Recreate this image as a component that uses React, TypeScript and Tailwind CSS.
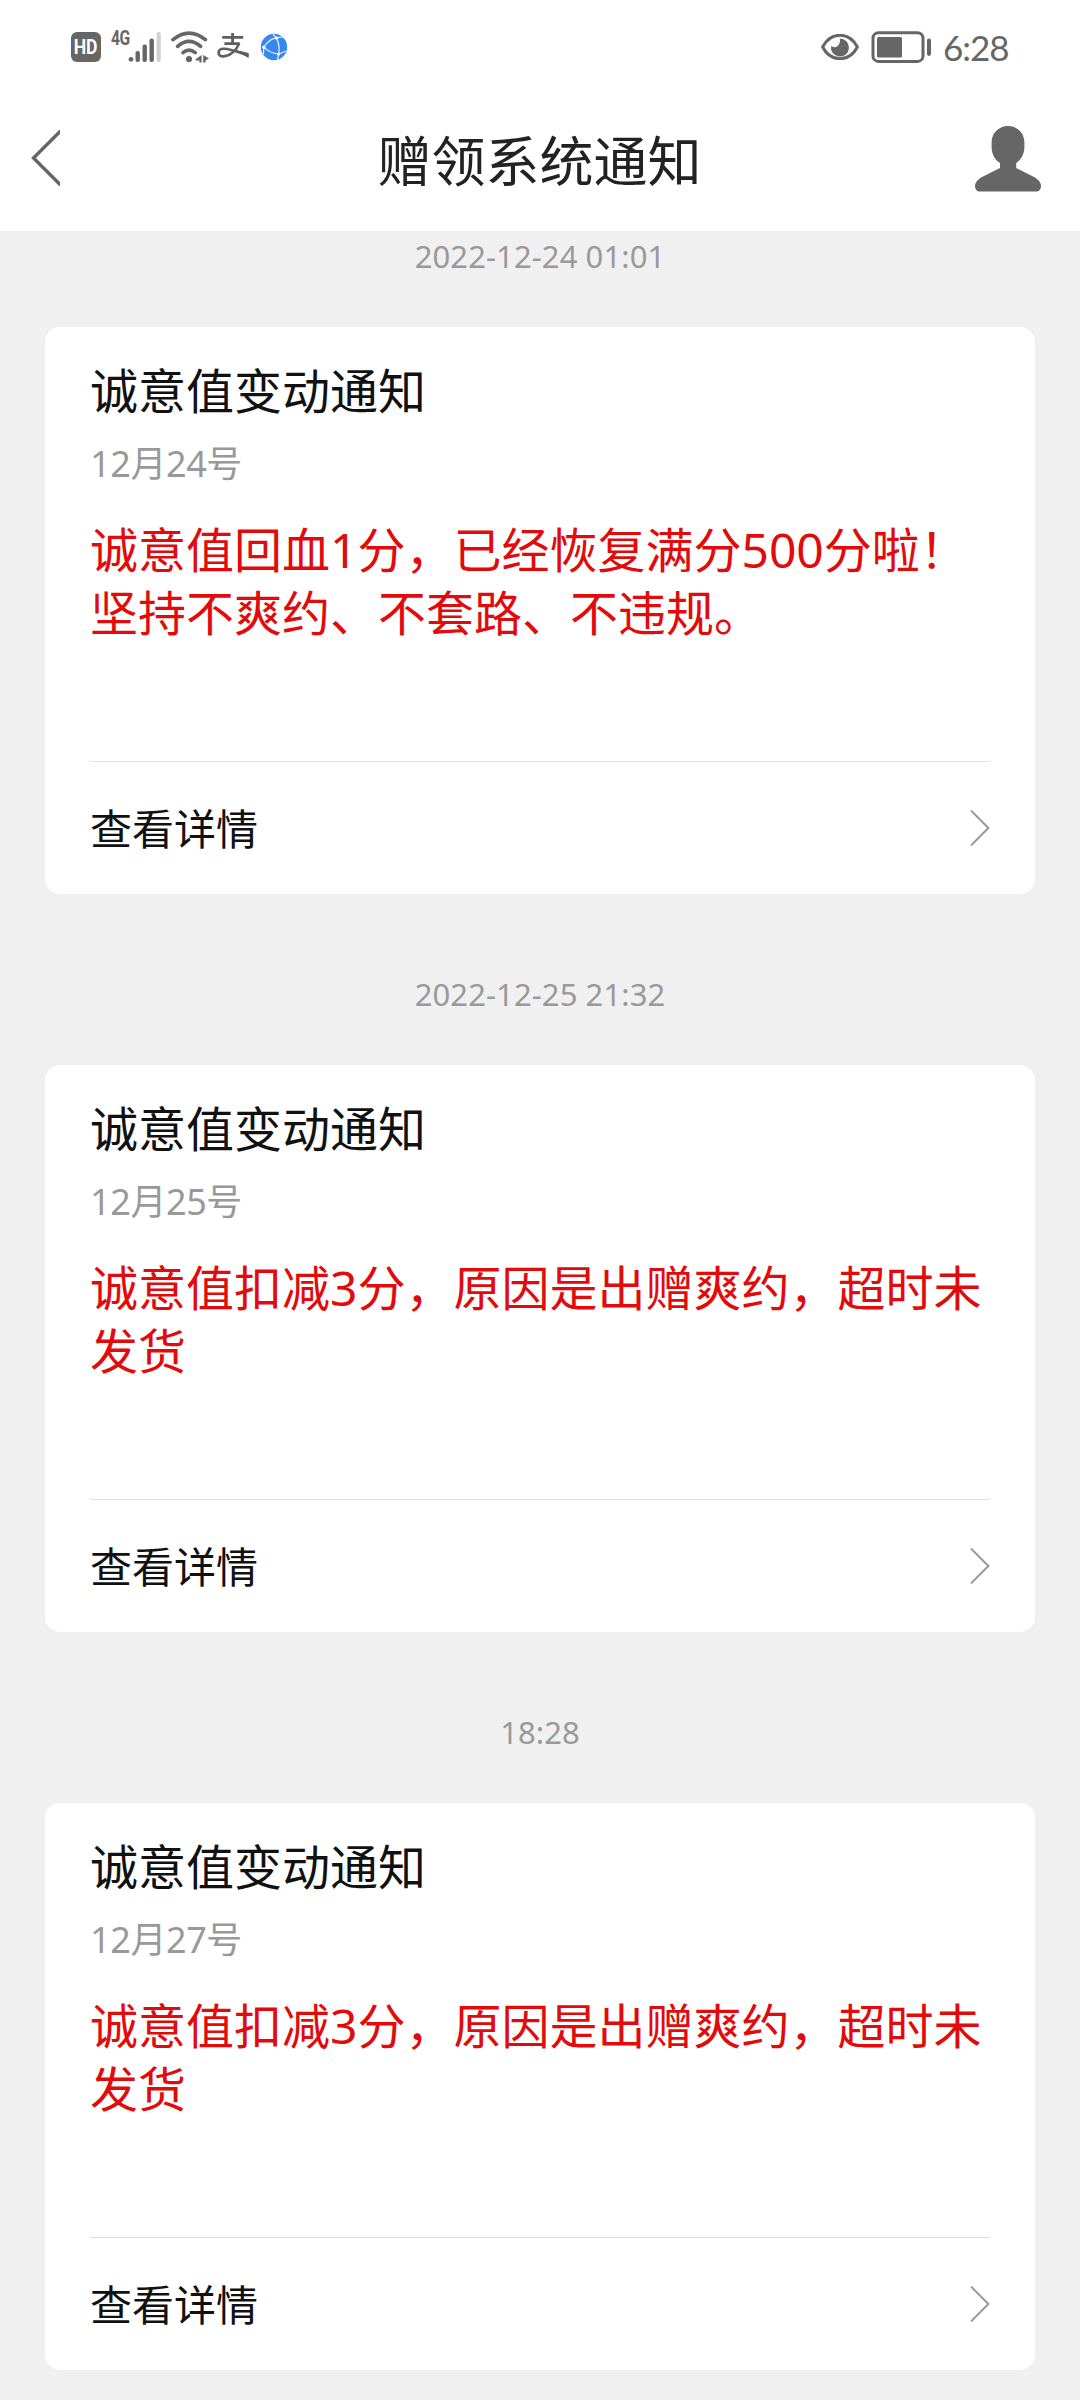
const notices = [
  {
    time: "2022-12-24 01:01",
    date: "12月24号",
    lines: ["诚意值回血1分，已经恢复满分500分啦！", "坚持不爽约、不套路、不违规。"],
  },
  {
    time: "2022-12-25 21:32",
    date: "12月25号",
    lines: ["诚意值扣减3分，原因是出赠爽约，超时未", "发货"],
  },
  {
    time: "18:28",
    date: "12月27号",
    lines: ["诚意值扣减3分，原因是出赠爽约，超时未", "发货"],
  },
];

function SignalIcon() {
  return (
    <svg width="33" height="32" viewBox="0 0 33 32" fill="#666" className="-ml-px">
      <circle cx="3" cy="28.3" r="2.4" />
      <rect x="7.5" y="20" width="4.4" height="11" rx="2" />
      <rect x="14.5" y="13.5" width="4.4" height="17.5" rx="2" />
      <rect x="21.5" y="7.5" width="4.4" height="23.5" rx="2" />
      <rect x="28.6" y="1" width="4.2" height="30" rx="2" fill="#d0d0d0" />
    </svg>
  );
}

function WifiIcon() {
  return (
    <svg width="38" height="32" viewBox="0 0 38 32" fill="none" stroke="#666" className="ml-[10px]">
      <path d="M2 8.6 Q18 -4.4 34.4 8.6" strokeWidth="3.7" strokeLinecap="round" />
      <path d="M6.6 15.4 Q18 5.4 29.6 15.4" strokeWidth="3.7" strokeLinecap="round" />
      <path d="M12 21.6 Q18 16.8 24.2 21.6" strokeWidth="3.7" strokeLinecap="round" />
      <circle cx="18" cy="28" r="3.1" fill="#666" stroke="none" />
      <path d="M30.6 24v7.6h-2.2v-2.2h-3.8v-1.2zM32.2 24l5.8 3.6-3.4 1.6v2.4h-2.4z" fill="#666" stroke="none" />
    </svg>
  );
}

function AlipayIcon() {
  return (
    <svg width="32" height="26" viewBox="0 0 32 26" fill="none" stroke="#5f5f5f" className="mb-px ml-2">
      <path d="M5.2 4.4h21M15.6 0v11M7.4 10.6h15.4" strokeWidth="2.8" />
      <path
        d="M22.2 10.4C19.4 17 13 23.4 6.4 23.4C.2 23.4 0 16.4 6 15.8C12.4 15.2 22 19.4 31.4 22.6"
        strokeWidth="2.6"
      />
      <path d="M17 16.6L31.6 20V25Z" fill="#5f5f5f" stroke="none" />
    </svg>
  );
}

function BrowserIcon() {
  return (
    <svg width="28" height="28" viewBox="0 0 28 28" className="ml-[11px]">
      <circle cx="14" cy="14" r="13.2" fill="#3688ee" />
      <g fill="none" stroke="#e8f2ff" strokeWidth="1.2">
        <path d="M3.8 14.2C7.4 8.4 13 3.6 22.6 4.2" />
        <path d="M3.8 14.2C7.4 18 12.8 20.6 18.6 21" />
        <path d="M13 1.2C18.8 6.6 21 14.4 17.4 26.6" />
        <path d="M18.4 21.2L26 18" />
        <path d="M3.8 14.2L3.4 21" />
      </g>
      <g fill="#fff">
        <circle cx="3.8" cy="14.2" r="1.6" />
        <circle cx="16.6" cy="5" r="1.6" />
        <circle cx="18.6" cy="21" r="1.6" />
      </g>
    </svg>
  );
}

function EyeIcon() {
  return (
    <svg width="38" height="26" viewBox="0 0 38 26">
      <path
        d="M1.6 13C9.8-2.6 28.2-2.6 36.4 13C28.2 28.6 9.8 28.6 1.6 13Z"
        fill="none"
        stroke="#666"
        strokeWidth="3"
        strokeLinejoin="round"
      />
      <path d="M18.8 4.6a9 9 0 1 1-8.7 7.4c1.8 1.4 4.4 1.6 6.3.2c2.4-1.8 3-4.6 2.4-7.6z" fill="#666" />
    </svg>
  );
}

function BatteryIcon() {
  return (
    <svg width="60" height="32" viewBox="0 0 60 32" fill="#666" className="ml-3">
      <rect x="2" y="1.8" width="50" height="28.6" rx="5.5" fill="none" stroke="#666" strokeWidth="3" />
      <rect x="6" y="6" width="25" height="20.4" rx="1.5" />
      <rect x="56" y="7.5" width="4" height="17.4" rx="1.8" />
    </svg>
  );
}

function StatusBar() {
  return (
    <div className="flex h-[93px] items-center justify-between px-[71px]">
      <div className="flex items-center">
        <div className="flex h-[30px] w-[30px] items-center justify-center rounded-[6px] bg-[#666] text-white">
          <span className="scale-x-[0.88] font-['Roboto','Noto_Sans_CJK_SC',sans-serif] text-[20px] font-bold leading-none">
            HD
          </span>
        </div>
        <span className="mb-[18px] ml-[10px] w-[18px] origin-left scale-x-[0.78] font-['Roboto','Noto_Sans_CJK_SC',sans-serif] text-[20px] font-bold leading-none tracking-[-0.5px] text-[#666]">
          4G
        </span>
        <SignalIcon />
        <WifiIcon />
        <AlipayIcon />
        <BrowserIcon />
      </div>
      <div className="flex items-center">
        <EyeIcon />
        <BatteryIcon />
        <span className="ml-[12px] mt-px w-[66px] whitespace-nowrap font-['Lato','Noto_Sans_CJK_SC',sans-serif] text-[35px] leading-none tracking-[-1px] text-[#666]">
          6:28
        </span>
      </div>
    </div>
  );
}

function NavBar() {
  return (
    <div className="flex h-[138px] items-center justify-between pl-[31px] pr-[39px]">
      <svg width="29" height="56" viewBox="0 0 29 56" fill="none" stroke="#666" strokeWidth="3.4" className="mr-[44px] mb-2">
        <path d="M30 0.5L2.5 28L30 55.5" />
      </svg>
      <h1 className="mb-[3px] text-[54px] leading-[72px] text-[#222]">赠领系统通知</h1>
      <svg width="66" height="66" viewBox="0 0 66 66" fill="#666" className="mb-[6px]">
        <path d="M33 0C42 0 49.4 7 49.4 16.5V21C49.4 28 46 34 41.2 37V42L60 51.6C64 54 66 57 66 60C66 63.4 64 65.6 61 65.6H5C2 65.6 0 63.4 0 60C0 57 2 54 6 51.6L25 42V37C20 34 16.6 28 16.6 21V16.5C16.6 7 24 0 33 0Z" />
      </svg>
    </div>
  );
}

function NoticeCard({ date, lines }: { date: string; lines: string[] }) {
  return (
    <div className="mx-[45px] flex h-[567px] flex-col rounded-[15px] bg-white px-[45px]">
      <h2 className="mt-[32px] text-[48px] leading-[64px] text-[#111]">诚意值变动通知</h2>
      <p className="mt-[17px] text-[36px] leading-[48px] tracking-[-0.4px] text-[#999]">{date}</p>
      <div className="mt-[30px] text-[48px] leading-[63px] text-[#e20a0a]">
        {lines.map((line) => (
          <p key={line} className="whitespace-nowrap">
            {line}
          </p>
        ))}
      </div>
      <div className="mt-auto flex h-[133px] items-center justify-between border-t border-[#e0e0e0]">
        <span className="mt-[2px] text-[42px] leading-[56px] text-[#111]">查看详情</span>
        <svg width="20" height="36" viewBox="0 0 20 36" fill="none" stroke="#999" strokeWidth="2">
          <path d="M1 0.6L18.4 18L1 35.4" />
        </svg>
      </div>
    </div>
  );
}

export default function App() {
  return (
    <div className="h-[2400px] w-[1080px] overflow-hidden bg-[#f0f0f0] font-['Noto_Sans','Noto_Sans_CJK_SC',sans-serif]">
      <header className="bg-white">
        <StatusBar />
        <NavBar />
      </header>
      <main className="-mt-[75px]">
        {notices.map((n) => (
          <section key={n.date}>
            <div className="flex h-[171px] items-center justify-center pt-[28px] text-[31px] leading-[40px] tracking-[0.1px] text-[#999]">
              {n.time}
            </div>
            <NoticeCard date={n.date} lines={n.lines} />
          </section>
        ))}
      </main>
    </div>
  );
}
